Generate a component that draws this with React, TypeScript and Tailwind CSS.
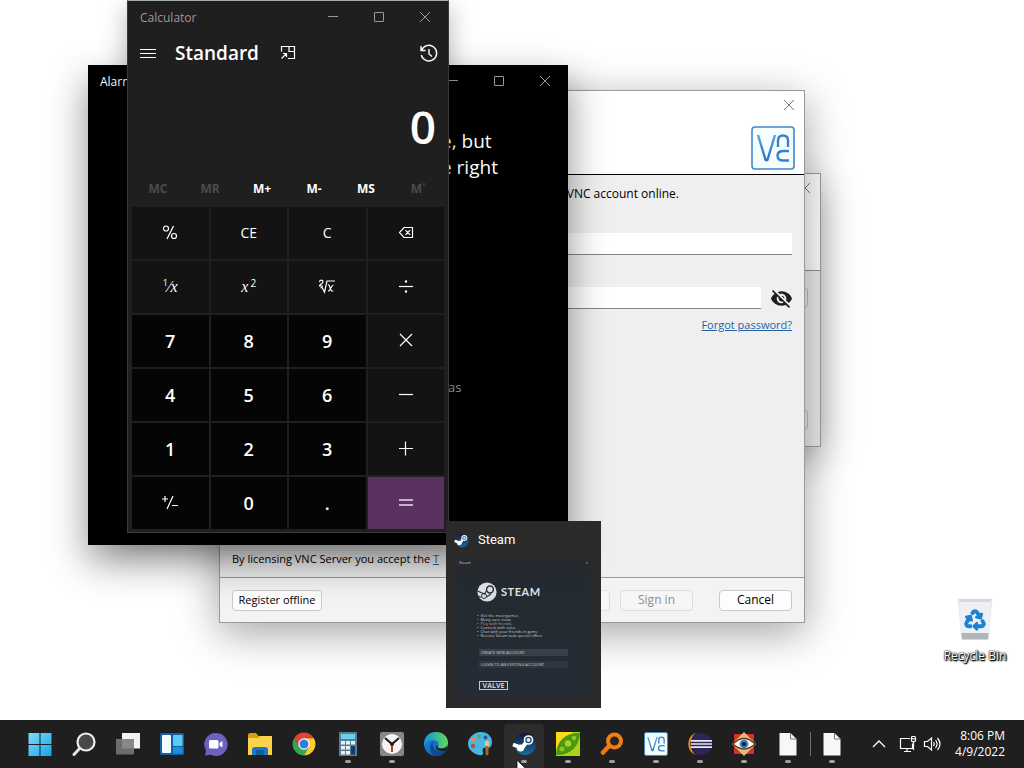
import React from "react";
import { FaRecycle } from "react-icons/fa";
import { MdVisibilityOff } from "react-icons/md";

type Kids = { children?: React.ReactNode };

function Minimize() {
  return (
    <svg className="h-3 w-3" viewBox="0 0 12 12" stroke="currentColor" fill="none">
      <path d="M1 5.5h10" />
    </svg>
  );
}
function Maximize() {
  return (
    <svg className="h-3 w-3" viewBox="0 0 12 12" stroke="currentColor" fill="none">
      <rect x="1.5" y="1.5" width="9" height="9" rx=".5" />
    </svg>
  );
}
function Close() {
  return (
    <svg className="h-3 w-3" viewBox="0 0 12 12" stroke="currentColor" fill="none">
      <path d="M1 1l10 10M11 1L1 11" />
    </svg>
  );
}

function WindowControls() {
  return (
    <div className="flex text-[#999]">
      <button aria-label="Minimize" className="grid h-8 w-[46px] place-items-center"><Minimize /></button>
      <button aria-label="Maximize" className="grid h-8 w-[46px] place-items-center"><Maximize /></button>
      <button aria-label="Close" className="grid h-8 w-[46px] place-items-center"><Close /></button>
    </div>
  );
}

function VncMark({ className }: { className: string }) {
  return (
    <svg className={className} viewBox="0 0 44 44" fill="none">
      <defs>
        <linearGradient id="vncg" x1="0" y1="0" x2="0" y2="1">
          <stop offset="0" stopColor="#58a5dc" />
          <stop offset="1" stopColor="#2f6fc4" />
        </linearGradient>
      </defs>
      <rect x="1" y="1" width="42" height="42" rx="3" fill="#f5feff" stroke="#4089c9" strokeWidth="1.6" />
      <path d="M7 9l7.600 25h1.800L24 9" stroke="url(#vncg)" strokeWidth="2.400" strokeLinejoin="round" />
      <path d="M27 21v-6.500c0-3.500 2-5 5-5s5 1.500 5 5V21" stroke="#3a7fca" strokeWidth="2.400" />
      <path d="M38 25h-5.500c-4 0-6 1.500-6 4.700s2 4.800 6 4.800H38" stroke="#3a7fca" strokeWidth="2.400" />
    </svg>
  );
}

/* ---------- Calculator ---------- */

const keyIcon = "h-5 w-5";
const stroke = { fill: "none", stroke: "currentColor", strokeWidth: 1.2 } as const;

const Percent = (
  <svg className={keyIcon} viewBox="0 0 20 20" {...stroke}>
    <circle cx="6" cy="5.500" r="2.500" /><circle cx="14" cy="13" r="2.500" /><path d="M13.500 3L7 16" />
  </svg>
);
const Backspace = (
  <svg className={keyIcon} viewBox="0 0 20 20" {...stroke}>
    <path d="M8 4.500h8.500v10H8L3.500 9.500zM9.500 7.200l4.600 4.600M14.100 7.200L9.500 11.800" />
  </svg>
);
const Reciprocal = (
  <span className="flex items-center font-['Liberation_Serif',serif] text-base leading-5">
    <sup className="font-['Open_Sans',sans-serif] text-[9px]">1</sup>
    <span>⁄</span>
    <i>x</i>
  </span>
);
const Square = (
  <span className="font-['Liberation_Serif',serif] text-base leading-5">
    <i>x</i>
    <sup className="ml-0.5 font-['Open_Sans',sans-serif] text-[10px]">2</sup>
  </span>
);
const Root = (
  <svg className={keyIcon} viewBox="0 0 20 20" {...stroke}>
    <path d="M2.500 5c0-2.600 3.500-2.400 3.500-.2C6 6.500 2.500 7.500 2.500 9H6M3.500 11l1.500-.8 2.500 5L10 4h8M11 8c2-1 2 6 4 6h1.500M16.500 8c-2-.5-3 6-5.500 6" />
  </svg>
);
const Divide = (
  <svg className={keyIcon} viewBox="0 0 20 20" {...stroke}>
    <path d="M3 9.500h14" /><circle cx="10" cy="4.500" r=".6" /><circle cx="10" cy="14.500" r=".6" />
  </svg>
);
const Times = <svg className={keyIcon} viewBox="0 0 20 20" {...stroke}><path d="M4 3l12 12M16 3L4 15" /></svg>;
const Minus = <svg className={keyIcon} viewBox="0 0 20 20" {...stroke}><path d="M3 9.500h14" /></svg>;
const Plus = <svg className={keyIcon} viewBox="0 0 20 20" {...stroke}><path d="M3 9.500h14M9.500 2.500v14" /></svg>;
const Equal = <svg className={keyIcon} viewBox="0 0 20 20" {...stroke} strokeWidth="1.600"><path d="M3 7h14M3 12h14" /></svg>;
const Negate = (
  <svg className={keyIcon} viewBox="0 0 20 20" {...stroke}>
    <path d="M2 6h6M5 3v6M13 3L7 16M12 12.500h6" />
  </svg>
);

type Key = { id: string; face: React.ReactNode; kind: "op" | "digit" | "equal" };
const keys: Key[] = [
  { id: "Percent", face: Percent, kind: "op" },
  { id: "Clear entry", face: "CE", kind: "op" },
  { id: "Clear", face: "C", kind: "op" },
  { id: "Backspace", face: Backspace, kind: "op" },
  { id: "Reciprocal", face: Reciprocal, kind: "op" },
  { id: "Square", face: Square, kind: "op" },
  { id: "Square root", face: Root, kind: "op" },
  { id: "Divide by", face: Divide, kind: "op" },
  { id: "Seven", face: "7", kind: "digit" },
  { id: "Eight", face: "8", kind: "digit" },
  { id: "Nine", face: "9", kind: "digit" },
  { id: "Multiply by", face: Times, kind: "op" },
  { id: "Four", face: "4", kind: "digit" },
  { id: "Five", face: "5", kind: "digit" },
  { id: "Six", face: "6", kind: "digit" },
  { id: "Minus", face: Minus, kind: "op" },
  { id: "One", face: "1", kind: "digit" },
  { id: "Two", face: "2", kind: "digit" },
  { id: "Three", face: "3", kind: "digit" },
  { id: "Plus", face: Plus, kind: "op" },
  { id: "Positive negative", face: Negate, kind: "digit" },
  { id: "Zero", face: "0", kind: "digit" },
  { id: "Decimal separator", face: ".", kind: "digit" },
  { id: "Equals", face: Equal, kind: "equal" },
];
const keyStyle = {
  op: "bg-[#131313] text-sm",
  digit: "bg-[#050505] text-lg font-semibold",
  equal: "bg-[#5a3160] text-[#f0d5f3]",
};
const memory = [
  { label: "MC", on: false },
  { label: "MR", on: false },
  { label: "M+", on: true },
  { label: "M-", on: true },
  { label: "MS", on: true },
  { label: "M˅", on: false },
];

function Calculator() {
  return (
    <section aria-label="Calculator" className="absolute top-0 left-[127px] w-[322px] border border-[#3a3a3a] border-t-[#a5aaa8] bg-[#1f1f1f] pb-[3px] text-white shadow-[0_8px_24px_rgba(0,0,0,0.3)]">
      <div className="flex items-center justify-between pl-3 text-xs text-[#999]">
        <span className="pt-0.5">Calculator</span>
        <WindowControls />
      </div>
      <div className="flex h-10 items-center px-3">
        <button aria-label="Open navigation">
          <svg className="h-4 w-4" viewBox="0 0 16 16" stroke="currentColor"><path d="M0 4.500h16M0 8.500h16M0 12.500h16" /></svg>
        </button>
        <h1 className="ml-[19px] text-[19px] font-semibold">Standard</h1>
        <button aria-label="Keep on top" className="ml-[21px]">
          <svg className="h-4 w-4" viewBox="0 0 16 16" {...stroke}>
            <path d="M1.500 6.500v-5h13v12H8M9 1.500v5h5.500M1.500 13.500l5-5M3 8.500h3.500V12" />
          </svg>
        </button>
        <button aria-label="History" className="-mr-[3px] ml-auto">
          <svg className="h-5 w-5" viewBox="0 0 20 20" {...stroke} strokeWidth="1.400">
            <path d="M2 3v4.500h4.500M2.500 7.500A7.800 7.800 0 1 1 2.300 12M10 6v5l3 2.500" />
          </svg>
        </button>
      </div>
      <output className="flex h-[102px] items-center justify-end px-3 pt-1 text-[46px] leading-none font-semibold">0</output>
      <div className="grid h-8 grid-cols-6 px-1 pb-1 text-xs font-bold">
        {memory.map((m) => (
          <button key={m.label} disabled={!m.on} className={m.on ? "text-white" : "text-[#4c4c4c]"}>{m.label}</button>
        ))}
      </div>
      <div className="grid grid-cols-4 gap-0.5 px-1">
        {keys.map((k) => (
          <button key={k.id} aria-label={k.id} className={`grid h-[52px] place-items-center ${keyStyle[k.kind]}`}>{k.face}</button>
        ))}
      </div>
    </section>
  );
}

/* ---------- Other windows ---------- */

function AlarmsWindow() {
  return (
    <section aria-label="Alarms" className="absolute top-[65px] left-[88px] h-[480px] w-[480px] bg-black text-white shadow-[0_16px_36px_rgba(0,0,0,0.45)]">
      <div className="flex items-center justify-between pl-3 text-xs">
        <span className="pt-0.5">Alarms</span>
        <WindowControls />
      </div>
      <p className="mt-[31px] pl-[353px] text-[19px] leading-[26px]">e, but<br />e right</p>
      <p className="mt-[197px] pl-[360px] text-[13px] leading-5 text-[#9b9b9b]">as</p>
    </section>
  );
}

function BackWindow() {
  return (
    <section aria-label="Dialog" className="absolute top-[173px] left-[400px] flex h-[274px] w-[421px] flex-col border border-[#9e9e9e] bg-[#ececec] shadow-[0_10px_36px_rgba(0,0,0,0.35)]">
      <div className="flex h-[97px] justify-end border-b border-[#8f8f8f] bg-white pt-2 pr-[9px] text-[#777]">
        <button aria-label="Close dialog" className="h-3 w-3"><Close /></button>
      </div>
      <div className="flex flex-1 flex-col items-end justify-between py-4 pr-3">
        <button aria-label="Browse" className="h-[21px] w-20 rounded border border-[#bdbdbd]" />
        <button aria-label="Done" className="h-[21px] w-20 rounded border border-[#bdbdbd]" />
      </div>
    </section>
  );
}

function VncWindow() {
  const field = "h-[22px] border-b border-[#858585] bg-white px-2 outline-none";
  const button = "h-[21px] rounded border border-[#c9c9c9] bg-[#fdfdfd]";
  return (
    <section aria-label="VNC Server licensing" className="absolute top-[90px] left-[219px] flex h-[533px] w-[586px] flex-col border border-[#999] bg-[#efefef] text-xs text-black shadow-[0_10px_40px_rgba(0,0,0,0.36)]">
      <header className="flex h-[84px] flex-col items-end border-b border-black bg-white pt-2 pr-[9px]">
        <button aria-label="Close" className="h-3 w-3 text-[#777]"><Close /></button>
        <VncMark className="mt-[15px] h-11 w-11" />
      </header>
      <div className="flex flex-1 flex-col px-3 pt-[11px]">
        <p className="pr-[113px] text-right leading-4">Sign in to your RealVNC account online.</p>
        <input aria-label="Email" className={`mt-[31px] ${field}`} />
        <div className="mt-8 flex items-center">
          <input aria-label="Password" type="password" className={`w-0 flex-1 ${field}`} />
          <button aria-label="Show password" className="-mr-px ml-[9px] h-[22px] text-[#1e1e1e]"><MdVisibilityOff size={23} /></button>
        </div>
        <a href="#forgot" className="mt-2 self-end text-[11px] leading-4 text-[#1f63a8] underline">Forgot password?</a>
        <p className="mt-auto pb-2.5 text-[11px] leading-4">By licensing VNC Server you accept the <a href="#terms" className="text-[#1f63a8] underline">T</a></p>
      </div>
      <footer className="flex h-[45px] items-center border-t border-[#999] bg-[#f3f3f3] px-3">
        <button className={`w-[90px] text-[11px] ${button}`}>Register offline</button>
        <button aria-label="Back" className="ml-auto h-[21px] w-[73px] rounded border border-[#dfdfdf] bg-[#f7f7f7]" />
        <button disabled className="ml-[10px] h-[21px] w-[73px] rounded border border-[#dcdcdc] bg-[#f6f6f6] text-[#8e8e8e]">Sign in</button>
        <button className={`ml-[26px] w-[73px] ${button}`}>Cancel</button>
      </footer>
    </section>
  );
}

function SteamGlyph({ className }: { className: string }) {
  return (
    <svg className={className} viewBox="0 0 24 24">
      <defs>
        <linearGradient id="steamg" x1="0" y1="0" x2="0" y2="1">
          <stop offset="0" stopColor="#101a38" /><stop offset="1" stopColor="#1b6a9c" />
        </linearGradient>
      </defs>
      <circle cx="13" cy="12" r="11" fill="url(#steamg)" />
      <path d="M1 12.500l9 3.500 5-7" stroke="#fff" strokeWidth="4" strokeLinejoin="round" fill="none" />
      <circle cx="8.500" cy="16" r="3.600" fill="#fff" />
      <circle cx="16.500" cy="8" r="4.800" fill="#fff" />
      <circle cx="16.500" cy="8" r="2.600" fill="#dfeaf5" stroke="#23446f" strokeWidth="1.300" />
    </svg>
  );
}

const steamLines = [
  "Get the most games",
  "Many user news",
  "Play with friends",
  "Connect with sales",
  "Chat with your friends in game",
  "Receive Steam web special offers",
];

function SteamPreview() {
  return (
    <aside aria-label="Steam preview" className="absolute top-[521px] left-[446px] flex h-[187px] w-[155px] flex-col bg-[#2a2a2a] px-2 pb-[10px] text-white">
      <div className="flex h-[38px] items-center gap-[9px] font-['Roboto','Liberation_Sans',sans-serif] text-[13px]">
        <SteamGlyph className="h-[15px] w-[15px]" />
        <span>Steam</span>
      </div>
      <div className="mx-[3px] flex flex-1 flex-col bg-[linear-gradient(#26292d,#232a31_20%,#252c35)] px-[22px] text-[#c7ccd2]">
        <div className="-mx-5 flex justify-between text-[4px] leading-[8px]"><span>Steam</span><span>×</span></div>
        <div className="-ml-0.5 mt-[15px] flex items-center gap-1 text-[#dfe1e3]">
          <svg className="h-5 w-5" viewBox="0 0 20 20">
            <circle cx="10" cy="10" r="9.600" fill="#dcdfe0" />
            <path d="M.5 9l7 3L10 8" fill="none" stroke="#27303a" strokeWidth="1.200" />
            <path d="M1 14l3 1.200M9.500 15L14 12" fill="none" stroke="#27303a" strokeWidth="1.200" />
            <circle cx="7" cy="14" r="2.500" fill="none" stroke="#27303a" />
            <circle cx="13" cy="7.500" r="3.400" fill="#dcdfe0" stroke="#27303a" strokeWidth="1.500" />
          </svg>
          <span className="font-['Lato',sans-serif] text-[11px] font-bold tracking-wider">STEAM</span>
        </div>
        <ul className="mt-3 -ml-0.5 text-[4px] leading-[4px]">
          {steamLines.map((l, i) => (
            <li key={l} className={`whitespace-nowrap ${i === 2 ? "text-[#c39a79]" : ""}`}>•&nbsp; {l}</li>
          ))}
        </ul>
        <div className="mt-[11px] h-[7px] bg-[#3a3f4b] pl-0.5 text-[4px] leading-[7px] whitespace-nowrap">CREATE NEW ACCOUNT</div>
        <div className="mt-[5px] h-[7px] bg-[#303641] pl-0.5 text-[4px] leading-[7px] whitespace-nowrap">LOGIN TO AN EXISTING ACCOUNT</div>
        <div className="mt-[13px] flex h-[9px] w-[29px] items-center justify-center border border-[#c2c7cc] text-[7px] leading-none font-bold">VALVE</div>
      </div>
    </aside>
  );
}

function RecycleBin() {
  return (
    <button className="absolute top-[598px] left-[937px] flex w-[76px] flex-col items-center">
      <span className="grid">
        <svg className="col-start-1 row-start-1 h-[42px] w-[36px]" viewBox="0 0 36 42">
          <path d="M1 1h34l-4 40H5z" fill="#eef0f3" stroke="#e3e6e9" strokeWidth=".7" />
          <path d="M2 1h32l-.4 3H2.400z" fill="#d5d8dc" />
          <path d="M4.300 35h27.400l-.7 6.500H5z" fill="#b1b4b8" />
        </svg>
        <FaRecycle stroke="currentColor" strokeWidth={36} className="col-start-1 row-start-1 mt-3 h-5 w-5 justify-self-center overflow-visible text-[#1a83d5]" />
      </span>
      <span className="mt-2 text-xs leading-4 text-white [text-shadow:0_0_1px_#000,0_0_2px_#000,1px_1px_1px_#000,1px_1px_2px_#000]">Recycle Bin</span>
    </button>
  );
}

/* ---------- Taskbar ---------- */

function Svg({ children }: Kids) {
  return <svg className="h-6 w-6" viewBox="0 0 24 24">{children}</svg>;
}

const fileIcon = (
  <Svg>
    <path d="M4 .5h11l6 6V23H4z" transform="translate(-.5 .5)" fill="#f7f7f7" />
    <path d="M14.500 1v6h6" fill="none" stroke="#777" strokeWidth="1" />
  </Svg>
);

const apps: { name: string; icon: React.ReactNode; open?: boolean; active?: boolean }[] = [
  {
    name: "Start",
    icon: (
      <Svg>
        <defs><linearGradient id="wing" x1="0" y1="0" x2="1" y2="1"><stop offset="0" stopColor="#7fdcfb" /><stop offset="1" stopColor="#15a3ee" /></linearGradient></defs>
        <path d="M.5 1h11v11H.5zM12.500 1h11v11h-11zM.5 13h11v11H.5zM12.500 13h11v11h-11z" fill="url(#wing)" />
      </Svg>
    ),
  },
  {
    name: "Search",
    icon: (
      <Svg>
        <path d="M8 16L2 22.500" stroke="#e4e4e4" strokeWidth="3" strokeLinecap="round" />
        <circle cx="14" cy="10" r="8.500" fill="#484848" stroke="#eee" strokeWidth="2.200" />
      </Svg>
    ),
  },
  {
    name: "Task view",
    icon: <Svg><rect x="6" y="1" width="18" height="15.500" fill="#f2f2f2" /><rect x="0" y="7" width="18" height="15.500" fill="#777" fillOpacity=".88" /></Svg>,
  },
  {
    name: "Widgets",
    icon: (
      <Svg>
        <rect y="1" width="24" height="22" rx="1.500" fill="#155fa8" />
        <rect x="2" y="3" width="9" height="18" rx="1" fill="#f4fbff" />
        <rect x="13" y="3" width="9.500" height="11" rx="1" fill="#5cc9f5" /><rect x="13" y="15" width="9.500" height="6.500" rx="1" fill="#1d8fe0" />
      </Svg>
    ),
  },
  {
    name: "Chat",
    icon: (
      <Svg>
        <path d="M12 1a11.500 11.500 0 1 1-5 21.800L1 23.500l1-5A11.500 11.500 0 0 1 12 1z" fill="#6b62c0" />
        <rect x="5" y="8" width="9.500" height="8.500" rx="1.500" fill="#fff" /><path d="M15.500 11l3-2v6.500l-3-2z" fill="#fff" />
      </Svg>
    ),
  },
  {
    name: "File Explorer",
    icon: (
      <Svg>
        <path d="M0 3q0-2 2-2h6l2.500 3H24v4H0z" fill="#d99c13" /><path d="M0 6h10l2-2h12v19H0z" fill="#fbd24c" />
        <path d="M4 23v-5q0-3 3-3h10q3 0 3 3v5z" fill="#1a78c9" /><path d="M8 18h8v5H8z" fill="#135a9b" />
      </Svg>
    ),
  },
  {
    name: "Chrome",
    icon: (
      <Svg>
        <g transform="translate(.6 .6) scale(.95)">
          <path d="M1.600 6A12 12 0 0 1 22.400 6H12L6.800 15z" fill="#df4532" />
          <path d="M1.600 6A12 12 0 0 0 12 24l5.200-9H6.800z" fill="#33a853" />
          <path d="M22.400 6A12 12 0 0 1 12 24l5.200-9L12 6z" fill="#fccb34" />
          <circle cx="12" cy="12" r="6" fill="#fff" /><circle cx="12" cy="12" r="4.700" fill="#3579e4" />
        </g>
      </Svg>
    ),
  },
  {
    name: "Calculator",
    open: true,
    icon: (
      <Svg>
        <rect x="3" width="18" height="24" fill="#5c7e95" /><rect x="5" y="2" width="14" height="5" fill="#6bd0ea" />
        <path d="M5 9h4v3.500H5zM10 9h4v3.500h-4zM15 9h4v3.500h-4zM5 14h4v3.500H5zM10 14h4v3.500h-4zM5 19h4v3.500H5zM10 19h4v3.500h-4z" fill="#e9f0f4" />
        <path d="M15 14h4v8.500h-4z" fill="#173c6c" />
      </Svg>
    ),
  },
  {
    name: "Clock",
    open: true,
    icon: (
      <Svg>
        <rect y="0" width="24" height="24" rx="2" fill="#85878a" /><circle cx="12" cy="12" r="10" fill="#f4f4f4" />
        <path d="M5 6l7 6 7-6" fill="none" stroke="#222" strokeWidth="2.200" /><path d="M12 12v8" stroke="#c83b36" strokeWidth="2" /><circle cx="12" cy="12" r="2" fill="#222" />
      </Svg>
    ),
  },
  {
    name: "Edge",
    icon: (
      <Svg>
        <defs>
          <linearGradient id="edg" x1="0" y1="0" x2="1" y2="0"><stop offset="0" stopColor="#1496dd" /><stop offset="1" stopColor="#5ddb55" /></linearGradient>
          <linearGradient id="edb" x1="0" y1="0" x2="1" y2="1"><stop offset="0" stopColor="#1b8be0" /><stop offset="1" stopColor="#0b58ac" /></linearGradient>
        </defs>
        <circle cx="12" cy="12" r="12" fill="url(#edb)" />
        <path d="M.3 10C1 4 6 0 12 0c7 0 12 5 12 10.500 0 4-3 6-6.500 6-3 0-4.500-1-3.500-2.500 2-3-1-6-4.500-6C6 8 1.500 9 .3 14z" fill="url(#edg)" />
        <path d="M9.500 9c-2 3 0 9.500 6 10.500 3 .5 5-.5 7-2-2 5-8 7.500-12 6C5 21 5 12 9.500 9z" fill="#0a4a93" />
        <path d="M14 14c-1 1.500.5 2.500 3.500 2.500 2 0 4.500-1 5.500-2.500l-.5 4c-3 2-8 2-10.500-2 0-1.500.5-3 2-2z" fill="#1f1f1f" />
      </Svg>
    ),
  },
  {
    name: "Paint",
    icon: (
      <Svg>
        <path d="M13 0c7 0 11 5 11 10s-3 7-6 6-4 2-3 4-1 4-4 3C4 21 0 17 0 11.500S6 0 13 0z" fill="#48b7e2" />
        <circle cx="5" cy="14" r="2.200" fill="#c44c3d" /><circle cx="5.500" cy="8" r="2.200" fill="#e58d43" /><circle cx="11" cy="4.500" r="2" fill="#5da75a" /><circle cx="17.500" cy="5.500" r="2" fill="#235b9b" />
        <path d="M17 10q2-3 4 0v4h-4z" fill="#f2c17b" /><path d="M17.500 14h3v8q-1.500 3-3 0z" fill="#a36636" />
      </Svg>
    ),
  },
  { name: "Steam", open: true, active: true, icon: <SteamGlyph className="h-6 w-6" /> },
  {
    name: "PeaZip",
    open: true,
    icon: (
      <Svg>
        <rect width="24" height="24" fill="#a6d418" /><path d="M0 0h17L0 17z" fill="#f6dc1d" />
        <path d="M0 23C1 8 9 1 24 1 23 15 15 23 0 23z" fill="#4c970d" />
        <circle cx="6" cy="17" r="2.500" fill="#8aca27" /><circle cx="12" cy="11.500" r="3.200" fill="#9fd52d" /><circle cx="18" cy="6" r="2.300" fill="#8aca27" />
      </Svg>
    ),
  },
  {
    name: "Everything",
    open: true,
    icon: (
      <Svg>
        <path d="M9 14L3 20.500" stroke="#ed7813" strokeWidth="4.500" strokeLinecap="round" />
        <circle cx="14.500" cy="9" r="6.500" fill="#242424" stroke="#f27d13" strokeWidth="4" />
      </Svg>
    ),
  },
  { name: "VNC Server", open: true, icon: <VncMark className="h-6 w-6" /> },
  {
    name: "Eclipse",
    open: true,
    icon: (
      <Svg>
        <circle cx="13" cy="12" r="11" fill="#2d2459" />
        <path d="M8 .8A12 12 0 0 0 8 23.200 14 14 0 0 1 8 .8z" fill="#e98d20" />
        <path d="M3 8.800h21M3 12h21M3 15.200h21" stroke="#e9e8f0" strokeWidth="1.700" />
      </Svg>
    ),
  },
  {
    name: "Image Viewer",
    open: true,
    icon: (
      <Svg>
        <rect x="2" y="2" width="20" height="20" fill="#ce3323" /><path d="M12 0l12 12-12 12L0 12z" fill="#edb777" />
        <path d="M1 12Q12 1 23 12 12 22 1 12z" fill="#fff6e9" stroke="#5c321c" strokeWidth="1.200" />
        <circle cx="12" cy="12" r="4.300" fill="#347fb8" /><circle cx="12" cy="12" r="2" fill="#0c1c33" />
      </Svg>
    ),
  },
  { name: "Document", open: true, icon: fileIcon },
];

function TaskButton({ name, icon, open, active }: (typeof apps)[number]) {
  return (
    <button aria-label={name} className={`mx-0.5 mt-1 flex h-11 w-10 flex-none flex-col items-center rounded-t pt-2 ${active ? "bg-[#2c2c2c]" : ""}`}>
      {icon}
      {open && <span className="mt-1 h-[3px] w-1.5 rounded-full bg-[#a0a0a0]" />}
    </button>
  );
}

function Taskbar() {
  return (
    <nav aria-label="Taskbar" className="flex h-12 flex-none items-center bg-[#1f1f1f] pl-[18px] text-white">
      {apps.map((a) => <TaskButton key={a.name} {...a} />)}
      <span className="-mr-px h-6 w-px bg-[#6e6e6e]" />
      <TaskButton name="Second document" open icon={fileIcon} />
      <div className="ml-auto flex items-center pr-[19px]">
        <button aria-label="Hidden icons" className="mr-3">
          <svg className="h-4 w-4" viewBox="0 0 16 16" fill="none" stroke="currentColor" strokeWidth="1.300"><path d="M2 11l6-6 6 6" /></svg>
        </button>
        <button aria-label="Network" className="mr-1.5">
          <svg className="h-[18px] w-[18px]" viewBox="0 0 18 18" fill="none" stroke="currentColor" strokeWidth="1.200">
            <path d="M11 3.500H1.500v10h12v-5M5 16.500h7M8 13.500v3M14.500 7v8" /><rect x="12.500" y="1.500" width="4" height="5" rx="1" /><path d="M12.500 3.800h4" />
          </svg>
        </button>
        <button aria-label="Volume" className="mr-3.5">
          <svg className="h-[18px] w-[18px]" viewBox="0 0 18 18" fill="none" stroke="currentColor" strokeWidth="1.200">
            <path d="M1.500 6.500h3l4-3.500v12l-4-3.500h-3zM10.500 7q1.500 2 0 4M12.500 5q3.200 4 0 8M14.500 3q5 6 0 12" />
          </svg>
        </button>
        <time className="text-right text-xs leading-4">8:06 PM<br />4/9/2022</time>
      </div>
    </nav>
  );
}

export default function App() {
  return (
    <main className="relative flex h-screen flex-col overflow-hidden bg-white font-['Open_Sans','Noto_Sans',sans-serif]">
      <div className="relative flex-1">
        <BackWindow />
        <VncWindow />
        <AlarmsWindow />
        <Calculator />
        <SteamPreview />
        <RecycleBin />
      </div>
      <Taskbar />
      <svg className="pointer-events-none absolute top-[759px] left-[516px] h-5 w-3" viewBox="0 0 12 20">
        <path d="M1 1v15l4-3.500 2.500 6 2-1L7 12h5z" fill="#fff" stroke="#111" strokeWidth=".8" />
      </svg>
    </main>
  );
}
